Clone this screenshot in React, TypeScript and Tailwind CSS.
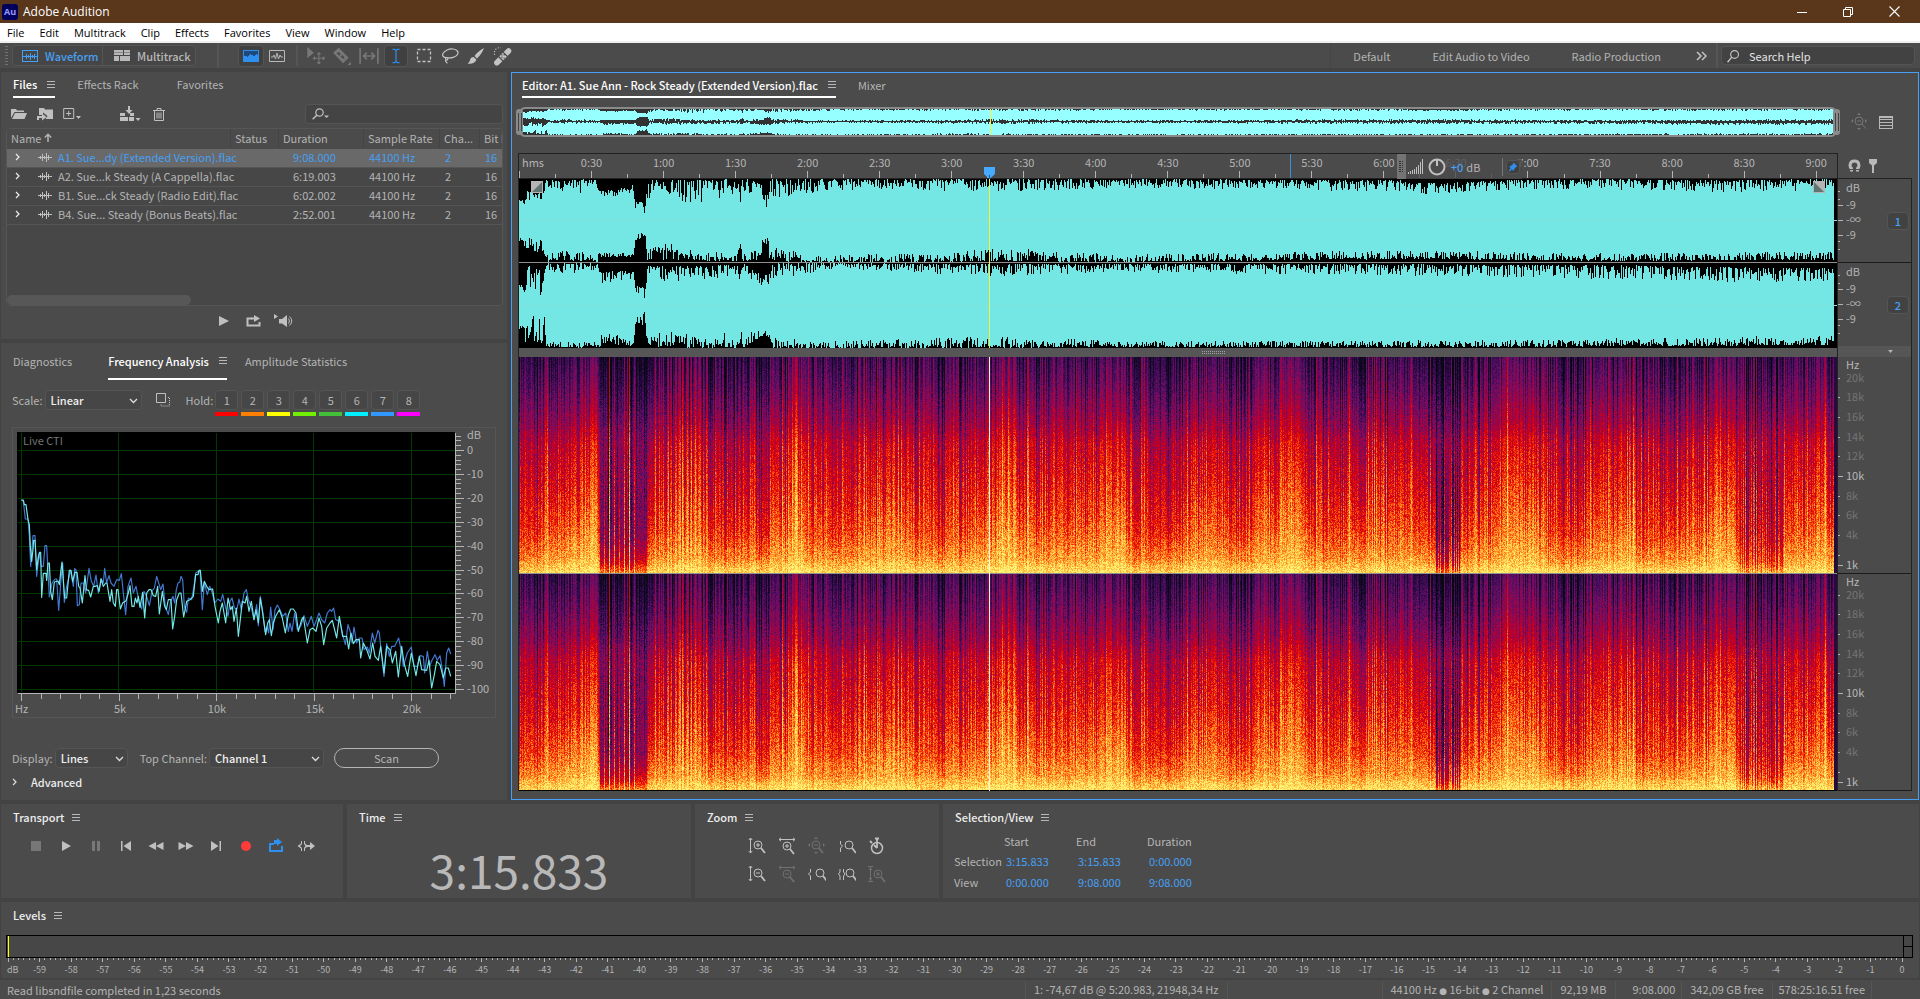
import { useEffect, useRef } from "react";
import type { ReactNode } from "react";
import clsx from "clsx";

type EnvelopeKey = [number, number, number];

const TRACK_WIDTH = 1319;
const DATA_END = 1316;

const FILES = [
  { name: "A1. Sue...dy (Extended Version).flac", duration: "9:08.000" },
  { name: "A2. Sue...k Steady (A Cappella).flac", duration: "6:19.003" },
  { name: "B1. Sue...ck Steady (Radio Edit).flac", duration: "6:02.002" },
  { name: "B4. Sue... Steady (Bonus Beats).flac", duration: "2:52.001" },
];

const HOLD_COLORS = [
  "bg-[#ff0000]",
  "bg-[#ff8000]",
  "bg-[#ffff00]",
  "bg-[#70f000]",
  "bg-[#42c038]",
  "bg-[#00f0ff]",
  "bg-[#3098ff]",
  "bg-[#ff00ff]",
];

const TRACE_TOP =
  "64,241 70,241 73,255 78,255 84,300 88,315 91,380 95,425 99,390 101,362 105,362 110,450 115,410 119,398 122,398 125,533 130,461 138,461 140,482 144,430 148,430 152,515 157,540 163,487 174,484 178,495 183,450 186,427 189,470 194,535 200,535 208,452 213,452 218,485 225,458 231,458 236,500 240,505 244,530 247,550 255,468 259,510 266,512 272,532 280,500 285,500 292,498 297,515 303,477 310,500 317,490 321,490 325,515 330,545 335,510 340,550 346,560 350,510 354,510 361,568 368,550 378,543 385,520 390,498 396,560 402,560 406,535 411,550 415,530 420,563 428,518 434,595 440,520 447,510 453,510 460,528 467,530 473,500 478,583 487,515 494,560 499,570 505,540 513,540 518,628 524,590 530,540 538,520 543,520 551,592 560,545 570,540 580,530 587,465 594,465 597,452 601,452 607,515 613,485 620,500 627,510 638,508 645,560 655,610 660,575 667,550 677,610 684,535 692,570 697,560 702,605 709,565 715,650 722,590 727,545 735,550 740,530 747,575 754,545 762,600 768,570 775,610 781,535 788,580 797,645 803,610 808,600 814,648 820,610 827,590 838,570 847,595 856,640 865,585 872,568 880,568 888,580 895,635 905,600 910,592 922,670 930,630 938,625 948,635 957,595 965,620 971,675 980,625 990,610 997,602 1010,655 1018,590 1028,650 1040,650 1046,688 1053,640 1060,672 1068,660 1078,660 1082,715 1090,670 1100,690 1110,718 1118,670 1125,710 1135,722 1142,680 1152,760 1160,680 1170,690 1177,730 1187,695 1195,772 1205,680 1212,730 1223,770 1234,700 1248,768 1258,710 1265,750 1280,752 1287,722 1295,805 1303,765 1310,725 1320,735 1330,775 1337,745 1345,745 1352,770";

const TRACE_BACK =
  "64,241 70,245 76,298 84,298 88,350 92,440 99,348 105,348 110,470 118,398 124,440 130,440 135,378 140,378 148,532 156,490 165,478 170,478 176,572 183,480 188,430 193,548 200,500 212,452 220,500 224,447 228,450 232,558 238,555 243,490 250,490 257,520 267,446 274,485 281,500 288,466 295,520 305,480 310,490 314,446 320,490 327,468 333,490 342,500 350,480 358,482 364,462 370,520 377,585 384,500 393,475 400,520 408,500 417,545 425,568 432,515 440,530 448,558 456,515 463,505 470,470 476,490 482,510 489,493 496,560 505,585 512,545 519,530 524,550 529,510 534,490 539,488 543,470 548,480 553,560 560,578 565,535 575,540 582,500 587,460 600,452 607,570 613,488 622,525 629,500 637,520 644,550 654,538 662,545 668,524 676,560 684,590 690,545 696,535 703,565 711,568 717,538 724,570 732,520 739,510 745,540 753,560 762,600 770,555 775,618 781,530 788,575 795,635 801,620 806,640 812,562 819,630 825,570 832,556 840,570 848,590 857,580 865,635 870,610 876,635 884,580 892,630 902,620 912,588 922,620 934,590 942,620 950,600 957,580 965,600 974,610 982,580 990,570 995,575 1001,565 1007,600 1020,605 1028,645 1036,675 1044,615 1052,640 1056,670 1062,622 1070,670 1078,655 1086,655 1092,690 1102,682 1108,700 1117,640 1124,670 1134,632 1138,640 1144,700 1152,770 1160,672 1168,710 1175,680 1184,680 1196,655 1205,700 1210,740 1222,700 1234,682 1242,740 1252,740 1260,708 1270,710 1274,760 1282,695 1289,740 1296,722 1305,705 1312,722 1320,708 1327,750 1333,800 1340,700 1346,685 1352,703";

// [x, smallest gap, largest gap] between the waveform and the edge of its lane
const LEFT_TOP: EnvelopeKey[] = [
  [0, 21, 26], [6, 21, 27], [7, 12, 26], [25, 12, 25], [26, 1, 8], [42, 2, 13], [62, 0, 14], [78, 1, 9],
  [79, 11, 16], [95, 11, 18], [114, 6, 15], [116, 22, 34], [126, 24, 36], [128, 0, 22], [180, 1, 24],
  [218, 0, 16], [221, 14, 24], [223, 0, 14], [242, 1, 15], [243, 14, 28], [249, 16, 28], [250, 0, 19],
  [300, 0, 14], [340, 0, 10], [470, 0, 13], [600, 0, 9], [878, 1, 13], [905, 4, 16], [940, 3, 14],
  [990, 1, 11], [1060, 0, 10], [1200, 1, 13], [1316, 0, 12],
];
const LEFT_BOTTOM: EnvelopeKey[] = [
  [0, 21, 25], [6, 14, 24], [25, 8, 26], [27, 0, 7], [40, 2, 12], [78, 0, 9], [80, 5, 9], [114, 5, 10],
  [116, 22, 34], [126, 24, 36], [128, 1, 14], [155, 3, 22], [165, 1, 14], [218, 1, 8], [221, 14, 24],
  [223, 1, 8], [242, 2, 14], [244, 20, 30], [249, 16, 24], [250, 2, 15], [275, 0, 12], [290, 0, 7],
  [430, 0, 9], [470, 1, 15], [600, 0, 8], [900, 3, 12], [1100, 1, 9], [1316, 2, 11],
];
const RIGHT_TOP: EnvelopeKey[] = [
  [0, 22, 26], [6, 22, 34], [8, 1, 26], [25, 10, 34], [27, 0, 7], [50, 0, 12], [79, 0, 7], [81, 8, 20],
  [114, 8, 18], [116, 23, 30], [126, 24, 37], [128, 3, 15], [150, 3, 20], [218, 2, 14], [221, 10, 20],
  [223, 0, 10], [243, 12, 26], [249, 12, 22], [250, 0, 16], [280, 0, 12], [320, 0, 6], [470, 1, 14],
  [600, 1, 9], [800, 1, 12], [1100, 2, 16], [1200, 4, 19], [1316, 5, 19],
];
const RIGHT_BOTTOM: EnvelopeKey[] = [
  [0, 19, 22], [6, 5, 34], [25, 5, 34], [27, 1, 6], [79, 0, 7], [82, 3, 16], [100, 2, 15], [114, 2, 8],
  [116, 24, 32], [126, 23, 38], [128, 0, 11], [155, 2, 22], [160, 0, 14], [196, 0, 18], [218, 0, 10],
  [222, 8, 22], [224, 0, 9], [243, 12, 26], [249, 10, 18], [251, 0, 15], [285, 0, 6], [460, 0, 12],
  [600, 1, 7], [1000, 1, 8], [1316, 3, 13],
];

// Slow loudness curve of the track, in palette units
const LOUDNESS: [number, number][] = [
  [0, -0.1], [20, -0.05], [26, 0.0], [76, 0.09], [80, -0.1], [110, -0.1], [116, -0.2], [127, -0.2],
  [130, -0.04], [175, 0.03], [200, -0.07], [238, -0.03], [241, -0.1], [249, -0.1], [251, 0.0],
  [283, 0.04], [287, -0.09], [300, -0.03], [320, -0.07], [370, 0.07], [410, -0.07], [470, 0.02],
  [480, 0.07], [540, -0.04], [605, 0.09], [613, -0.09], [650, -0.08], [682, 0.03], [720, -0.05],
  [778, 0.07], [800, -0.06], [850, 0.01], [915, -0.03], [918, -0.12], [940, -0.11], [952, -0.03],
  [1020, 0.07], [1030, -0.07], [1060, -0.05], [1115, 0.07], [1120, -0.1], [1150, -0.03],
  [1214, 0.06], [1219, -0.08], [1260, -0.06], [1300, 0.02], [1319, -0.02],
];

// Average energy from the highest frequency (0) down to the lowest (1)
const SPECTRUM: [number, number][] = [
  [0, 0.19], [0.15, 0.29], [0.3, 0.41], [0.4, 0.52], [0.6, 0.61], [0.8, 0.72], [0.93, 0.83], [1, 0.97],
];

const PALETTE = [
  [8, 8, 20], [30, 8, 52], [62, 12, 88], [104, 14, 100], [142, 8, 84], [180, 0, 48], [216, 0, 18],
  [238, 36, 0], [255, 100, 20], [255, 160, 50], [255, 208, 76], [255, 244, 120],
];

const DB_LABELS: [string, number][] = [["dB", 9], ["-9", 26], ["-∞", 41], ["-9", 56]];
const HZ_LABELS: [string, number, boolean][] = [
  ["Hz", 8, true], ["20k", 21, false], ["18k", 40, false], ["16k", 60, false], ["14k", 80, false],
  ["12k", 99, false], ["10k", 119, true], ["8k", 139, false], ["6k", 158, false], ["4k", 178, false],
  ["1k", 208, true],
];

function makeRandom(seed: number) {
  let s = seed;
  return () => {
    s = (s * 1664525 + 1013904223) >>> 0;
    return s / 4294967296;
  };
}

function interpolate(keys: [number, number][], at: number) {
  let k = 0;
  while (k < keys.length - 2 && keys[k + 1][0] <= at) k++;
  const [x0, v0] = keys[k];
  const [x1, v1] = keys[k + 1];
  return v0 + ((v1 - v0) * (at - x0)) / (x1 - x0);
}

function envelope(keys: EnvelopeKey[], seed: number) {
  const random = makeRandom(seed);
  const out: number[] = [];
  let k = 0;
  for (let x = 0; x < DATA_END; x++) {
    while (k < keys.length - 2 && keys[k + 1][0] <= x) k++;
    const [x0, lo0, hi0] = keys[k];
    const [x1, lo1, hi1] = keys[k + 1];
    const t = Math.min(1, (x - x0) / (x1 - x0));
    const lo = lo0 + (lo1 - lo0) * t;
    const hi = hi0 + (hi1 - hi0) * t;
    out.push(Math.round(lo + (hi - lo) * Math.pow(random(), 1.7)));
  }
  return out;
}

function lanePath(top: number[], bottom: number[], height: number) {
  let d = "";
  top.forEach((gap, x) => {
    d += `M${x} ${gap}h1V${height - bottom[x]}h-1z`;
  });
  return d;
}

function overviewPath(a: number[], b: number[], c: number[], d: number[]) {
  let path = "";
  const size = (v: number) => Math.round(v / 6.5);
  for (let x = 0; x < DATA_END; x++) {
    path += `M${x} 0h1v${size(a[x])}h-1z`;
    path += `M${x} ${12 - size(b[x])}h1V${13 + size(c[x])}h-1z`;
    path += `M${x} 26h1v${-size(d[x])}h-1z`;
  }
  return path;
}

const leftTop = envelope(LEFT_TOP, 11);
const leftBottom = envelope(LEFT_BOTTOM, 29);
const rightTop = envelope(RIGHT_TOP, 47);
const rightBottom = envelope(RIGHT_BOTTOM, 83);

function Icon({ size = 18, className, children }: { size?: number; className?: string; children: ReactNode }) {
  return (
    <svg
      width={size}
      height={size}
      viewBox="0 0 18 18"
      fill="none"
      stroke="currentColor"
      className={clsx("shrink-0", className)}
      aria-hidden="true"
    >
      {children}
    </svg>
  );
}

function Burger() {
  return (
    <button type="button" aria-label="Panel menu" className="h-2 w-2 text-[#b8b8b8]">
      <svg width="8" height="7" viewBox="0 0 8 7" shapeRendering="crispEdges" fill="currentColor">
        <path d="M0 0h8v1H0zM0 3h8v1H0zM0 6h8v1H0z" />
      </svg>
    </button>
  );
}

function Tab({ children, active = false }: { children: ReactNode; active?: boolean }) {
  return (
    <div
      className={clsx(
        "flex h-full items-center gap-[10px] border-b-2",
        active ? "border-white text-white font-medium" : "border-transparent text-[#b4b4b4]"
      )}
    >
      <button type="button">{children}</button>
      {active && <Burger />}
    </div>
  );
}

function Select({ id, label, value, className }: { id: string; label: string; value: string; className: string }) {
  return (
    <div className="flex items-center gap-[2px]">
      <label htmlFor={id} className="whitespace-nowrap">
        {label}
      </label>
      <div className={clsx("relative", className)}>
        <select
          id={id}
          className="h-5 w-full appearance-none rounded-sm border border-[#555] bg-[#464646] pl-[5px] font-medium text-[#eee]"
        >
          <option>{value}</option>
        </select>
        <svg width="9" height="6" viewBox="0 0 9 6" className="pointer-events-none absolute right-1 top-2">
          <path d="M1 1l3.5 3.5L8 1" fill="none" stroke="#ddd" strokeWidth="1.3" />
        </svg>
      </div>
    </div>
  );
}

function TitleBar() {
  return (
    <header className="flex h-[23px] items-center justify-between bg-[#5a361b] font-['Open_Sans',sans-serif] text-xs text-white">
      <div className="flex items-center gap-[5px] pl-[2px]">
        <span className="flex h-4 w-4 items-center justify-center rounded-[3px] bg-[#00005b] text-[9px] font-bold text-[#9999ff]">
          Au
        </span>
        <h1>Adobe Audition</h1>
      </div>
      <div className="flex items-center gap-9 pr-5">
        <button type="button" aria-label="Minimize">
          <svg width="10" height="10" viewBox="0 0 10 10">
            <path d="M0 5.5h10" stroke="#fff" />
          </svg>
        </button>
        <button type="button" aria-label="Restore">
          <svg width="10" height="10" viewBox="0 0 10 10" fill="none" stroke="#fff">
            <path d="M.5 2.5h7v7h-7zM2.500 2.500v-2h7v7h-2" />
          </svg>
        </button>
        <button type="button" aria-label="Close">
          <svg width="11" height="11" viewBox="0 0 11 11">
            <path d="M.5.5l10 10M10.500.5l-10 10" stroke="#fff" strokeWidth="1.100" />
          </svg>
        </button>
      </div>
    </header>
  );
}

function MenuBar() {
  const items = ["File", "Edit", "Multitrack", "Clip", "Effects", "Favorites", "View", "Window", "Help"];
  return (
    <nav className="flex h-5 items-center gap-[15px] border-b-2 border-[#f0f0f0] bg-white pl-[7px] pt-[2px] font-['Open_Sans',sans-serif] text-[11px] text-black">
      {items.map((item) => (
        <button type="button" key={item}>
          {item}
        </button>
      ))}
    </nav>
  );
}

function Toolbar() {
  return (
    <div className="flex h-[25px] items-center bg-[#4b4b4b]">
      <svg width="3" height="20" className="ml-[5px] mr-1" shapeRendering="crispEdges">
        <path d="M1.500 0v20" stroke="#707070" strokeWidth="3" strokeDasharray="1 2" />
      </svg>
      <div className="flex h-[21px] rounded-sm border border-[#555] bg-[#464646] font-medium">
        <button type="button" className="flex w-[90px] items-center gap-[7px] border-r border-[#555] pl-[9px] text-[#46a0f5]">
          <svg width="16" height="12" viewBox="0 0 16 12" fill="none" stroke="currentColor" shapeRendering="crispEdges">
            <path d="M.5.5h15v11H.5zM1 6h14M4.500 3.500v5M6.500 4.500v3M8.500 2.500v7M10.500 4.500v3M12.500 3.500v5" />
          </svg>
          Waveform
        </button>
        <button type="button" className="flex w-[92px] items-center gap-[7px] pl-[11px] text-[#b8b8b8]">
          <svg width="16" height="11" viewBox="0 0 16 11" fill="#b8b8b8" shapeRendering="crispEdges">
            <path d="M0 0h9v5H0zM10 0h6v5h-6zM0 6h5v5H0zM6 6h10v5H6z" />
            <path d="M0 2h9v1H0zM10 2h6v1h-6z" fill="#8a8a8a" />
          </svg>
          Multitrack
        </button>
      </div>
      <div className="ml-[21px] h-[25px] w-[2px] bg-[#555]" />
      <button
        type="button"
        aria-label="Show waveform"
        className="ml-[19px] flex h-[22px] w-[26px] items-center justify-center rounded-sm border border-[#555] bg-[#404040]"
      >
        <svg width="16" height="12" viewBox="0 0 16 12" shapeRendering="crispEdges">
          <path d="M0 0h16v12H0z" fill="#2f8fee" />
          <path d="M1 1h14v5l-1-3-1 3-1-2-1 4-1-4-1 2-1-3-1 3-1-2-1 4-1-3-1 3-1-4-1 5z" fill="#1d4a7c" />
        </svg>
      </button>
      <button type="button" aria-label="Show spectral display" className="ml-[5px]">
        <svg width="16" height="12" viewBox="0 0 16 12" fill="none" stroke="#b8b8b8">
          <path d="M.5.5h15v11H.5zM2 7h2l1-2 1.500 4L8 3l1.500 6L11 5l1 2h2" />
        </svg>
      </button>
      <div className="ml-[11px] h-[21px] w-[2px] bg-[#555]" />
      <div className="ml-[7px] flex items-center gap-[7px] text-[#777]">
        <button type="button" aria-label="Move tool">
          <Icon size={20}>
            <path d="M2 1v10l6-5z" fill="currentColor" stroke="none" />
            <path d="M12.500 6v10M7.500 11h10M11 7.500L12.500 6 14 7.500M11 14.500l1.500 1.500 1.500-1.500M9 9.500L7.500 11 9 12.500M16 9.500l1.500 1.500-1.500 1.500" />
          </Icon>
        </button>
        <button type="button" aria-label="Razor tool">
          <Icon size={20}>
            <path d="M1 6l5-4.500 9 9-5 5z" fill="currentColor" stroke="none" />
            <path d="M5 6l7 6" stroke="#4b4b4b" strokeWidth="2" strokeDasharray="3 1.500" />
            <path d="M17 14v3h-3z" fill="currentColor" stroke="none" />
          </Icon>
        </button>
        <button type="button" aria-label="Slip tool">
          <Icon size={20}>
            <path d="M1 2v14M17 2v14" strokeWidth="1.500" />
            <path d="M4 9h10M7 6L4 9l3 3M11 6l3 3-3 3" strokeWidth="1.500" />
          </Icon>
        </button>
      </div>
      <button
        type="button"
        aria-label="Time selection tool"
        className="ml-[5px] flex h-[22px] w-6 items-center justify-center rounded-sm border border-[#555] bg-[#404040] text-[#2f8fee]"
      >
        <Icon size={16}>
          <path d="M5 1.500h2.500L9 3l1.500-1.500H13M5 16.500h2.500L9 15l1.500 1.500H13M9 3v12" strokeWidth="1.300" />
        </Icon>
      </button>
      <div className="ml-[7px] flex items-center gap-2 text-[#c4c4c4]">
        <button type="button" aria-label="Marquee selection tool">
          <Icon>
            <path d="M2.500 2.500h13v12h-13z" strokeDasharray="3 2" strokeWidth="1.300" />
          </Icon>
        </button>
        <button type="button" aria-label="Lasso selection tool">
          <Icon>
            <path d="M6 10.500C2.500 10.800.8 8.800 2 6.500 3.500 3.500 8 1.500 12 2c4 .5 6 3 4.500 5.500-1.500 2.500-6.500 4-10.500 3zM6 10.500c1.500.8.800 2.800-.5 2.500-1.500-.3-1.200-2.300.5-2.500M4.800 12.800c-.6 1.500.2 2.700 1.700 3.500" strokeWidth="1.200" />
          </Icon>
        </button>
        <button type="button" aria-label="Paintbrush selection tool">
          <Icon>
            <path d="M17 1c-4 2-7.500 5-9.500 8l2.500 2.500C13 9 15.500 5 17 1zM6.500 10c-2 0-3 1-3.500 3-.300 1.500-1 2.500-2.500 3.500 3.500.8 7.500 0 9-4z" fill="currentColor" stroke="none" />
          </Icon>
        </button>
        <button type="button" aria-label="Spot healing brush">
          <Icon size={20}>
            <path d="M1.500 13.500l11-11a2.500 2.500 0 013.500 3.500l-11 11a2.500 2.500 0 01-3.500-3.500z" fill="currentColor" stroke="none" />
            <path d="M5 9.500l4 4M9 5.500l4 4M7.500 10h1M9.500 8h1M9.500 11h1M7.500 8h1" stroke="#4b4b4b" strokeWidth="1.100" />
            <path d="M1.500 8C.5 4 3 1 7 1.500" strokeDasharray="1 1.500" />
          </Icon>
        </button>
      </div>
      <div className="ml-auto flex h-full items-center border-l border-[#454545] pl-[22px]">
        <div className="flex gap-[42px]">
          <button type="button">Default</button>
          <button type="button">Edit Audio to Video</button>
          <button type="button">Radio Production</button>
        </div>
        <button type="button" aria-label="More workspaces" className="ml-[35px]">
          <svg width="11" height="10" viewBox="0 0 11 10" fill="none" stroke="#c4c4c4" strokeWidth="1.500">
            <path d="M1 1l4 4-4 4M6 1l4 4-4 4" />
          </svg>
        </button>
        <div className="ml-[9px] h-full w-[2px] bg-[#555]" />
        <label className="ml-[3px] mr-[5px] flex h-[19px] w-[194px] items-center gap-[9px] rounded-sm border border-[#555] bg-[#424242] pl-1">
          <Icon size={14} className="text-[#c4c4c4]">
            <circle cx="11" cy="7" r="5" strokeWidth="1.500" />
            <path d="M7.500 10.500L2 17" strokeWidth="1.800" />
          </Icon>
          <input
            aria-label="Search Help"
            placeholder="Search Help"
            className="w-full bg-transparent outline-none placeholder:text-[#e4e4e4]"
          />
        </label>
      </div>
    </div>
  );
}

function LoopIcon({ className }: { className?: string }) {
  return (
    <svg width="15" height="12" viewBox="0 0 15 12" className={className} fill="none" stroke="currentColor">
      <path d="M6 3.500H1.500v7h12V7" strokeWidth="2" />
      <path d="M5 2.500h3V0l6 3.500L8 7V4.500H5z" fill="currentColor" stroke="none" />
    </svg>
  );
}

function FilesPanel() {
  return (
    <section className="bg-[#4b4b4b] pb-[10px] pl-[5px] pr-1">
      <div className="flex h-[26px] items-center gap-[22px] pl-[7px]">
        <Tab active>Files</Tab>
        <div className="flex gap-[38px]">
          <Tab>Effects Rack</Tab>
          <Tab>Favorites</Tab>
        </div>
      </div>
      <div className="mt-[6px] flex h-5 items-center pl-[5px] text-[#c0c0c0]">
        <button type="button" aria-label="Open file">
          <svg width="16" height="12" viewBox="0 0 16 12" fill="currentColor">
            <path d="M0 10V1h5l1 1.500h7V4H3.500zM4 5h12l-2.500 6H1z" />
          </svg>
        </button>
        <button type="button" aria-label="Import file" className="ml-[10px]">
          <svg width="17" height="14" viewBox="0 0 17 14" fill="currentColor">
            <path d="M2 7V1h5l1 1.500h8V12H8.500l2-3L6 5.500V8H2zM0 9h5V6.500L9.500 10 5 13.500V11H2v2H0z" />
          </svg>
        </button>
        <button type="button" aria-label="New file" className="ml-[9px]">
          <svg width="19" height="14" viewBox="0 0 19 14" fill="none" stroke="currentColor">
            <path d="M.7 1.500h10v10H.7zM5.700 4v5M3.200 6.500h5" />
            <path d="M13 9h5l-2.500 3z" fill="currentColor" stroke="none" />
          </svg>
        </button>
        <button type="button" aria-label="Insert into multitrack" className="ml-[38px]">
          <svg width="21" height="16" viewBox="0 0 21 16" fill="currentColor">
            <path d="M0 7h5v3H0zM10 7h4v3h-4zM0 11h8v4H0zM9 11h5v4H9zM8 0h2v4h2.500L9 8 5.500 4H8zM15.500 12h5L18 15z" />
          </svg>
        </button>
        <button type="button" aria-label="Delete" className="ml-3">
          <svg width="12" height="13" viewBox="0 0 12 13" fill="none" stroke="currentColor">
            <path d="M0 2.500h12M4 2V.5h4V2M1.500 3v9.500h9V3M4 4.500v6M6 4.500v6M8 4.500v6" />
          </svg>
        </button>
        <label className="ml-auto flex h-5 w-[198px] items-center rounded-sm border border-[#555] bg-[#444] pl-[6px]">
          <svg width="18" height="12" viewBox="0 0 18 12" fill="none" stroke="currentColor" className="shrink-0">
            <circle cx="7.500" cy="4.500" r="3.700" strokeWidth="1.200" />
            <path d="M5 7L.7 11.300" strokeWidth="1.400" />
            <path d="M12 7.500h5L14.500 10z" fill="currentColor" stroke="none" />
          </svg>
          <input aria-label="Filter files" className="w-full bg-transparent outline-none" />
        </label>
      </div>
      <div className="mt-1 flex h-[178px] w-[497px] flex-col justify-between overflow-hidden rounded-sm border border-[#565656] bg-[#474747]">
        <table className="w-full table-fixed border-separate border-spacing-0 text-left">
          <colgroup>
            <col className="w-[223px]" />
            <col className="w-[48px]" />
            <col className="w-[85px]" />
            <col className="w-[76px]" />
            <col className="w-[40px]" />
            <col />
          </colgroup>
          <thead>
            <tr className="h-5 bg-[#4b4b4b] [&>th]:pb-[3px] [&>th]:pl-1 [&>th]:pt-0 [&>th]:font-normal [&>th+th]:border-l [&>th+th]:border-[#444]">
              <th>
                <span className="flex items-center gap-[3px]">
                  Name
                  <svg width="8" height="9" viewBox="0 0 8 9" fill="none" stroke="#b4b4b4" strokeWidth="1.500">
                    <path d="M4 9V1.500M.8 4.500L4 1.300l3.200 3.200" />
                  </svg>
                </span>
              </th>
              <th>Status</th>
              <th>Duration</th>
              <th>Sample Rate</th>
              <th>Cha...</th>
              <th className="overflow-hidden whitespace-nowrap">Bit D</th>
            </tr>
          </thead>
          <tbody>
            {FILES.map((file, i) => (
              <tr
                key={file.name}
                className={clsx(
                  "h-[19px] whitespace-nowrap [&>td]:border-b [&>td]:border-[#555] [&>td]:py-0 [&>td]:pb-[2px]",
                  i === 0 && "bg-[#696969] text-[#46a0f5]"
                )}
              >
                <td className="pl-2">
                  <span className="flex items-center">
                    <svg width="5" height="8" viewBox="0 0 5 8" fill="none" stroke="#eee" strokeWidth="1.200" className="shrink-0">
                      <path d="M1 1l3 3-3 3" />
                    </svg>
                    <svg width="14" height="9" viewBox="0 0 14 9" className="ml-[18px] mr-[6px] shrink-0" stroke="#c0c0c0" shapeRendering="crispEdges">
                      <path d="M0 4.500h14M2.500 3v3M4.500 1v7M6.500 3v3M8.500 0v9M10.500 2v5" />
                    </svg>
                    {file.name}
                  </span>
                </td>
                <td />
                <td className="pl-[15px]">{file.duration}</td>
                <td className="pl-[6px]">44100 Hz</td>
                <td className="pl-[6px]">2</td>
                <td className="pl-[6px]">16</td>
              </tr>
            ))}
          </tbody>
        </table>
        <div className="h-[10px] w-[184px] rounded-full bg-[#575757]" />
      </div>
      <div className="mt-[7px] flex h-4 items-center justify-center gap-[17px] pl-1 text-[#c0c0c0]">
        <button type="button" aria-label="Play preview">
          <svg width="10" height="10" viewBox="0 0 10 10" fill="currentColor">
            <path d="M0 0v10l10-5z" />
          </svg>
        </button>
        <button type="button" aria-label="Loop preview">
          <LoopIcon />
        </button>
        <button type="button" aria-label="Auto-play" className="-ml-1">
          <svg width="21" height="14" viewBox="0 0 21 14" fill="none" stroke="currentColor">
            <path d="M0 0v5l4-2.500zM5 5h3l5-4v12L8 9.500H5z" fill="currentColor" stroke="none" />
            <path d="M14.500 4.500q2 2.500 0 5M15.500 2.500q4.500 4.500 0 9" />
          </svg>
        </button>
      </div>
    </section>
  );
}

function FrequencyChart() {
  const dbTicks = Array.from({ length: 54 }, (_, i) => i);
  return (
    <svg viewBox="0 0 484 291" className="mt-[11px] block h-[291px] w-[484px]" fill="#b4b4b4" fontSize="11">
      <rect x=".5" y=".5" width="483" height="290" fill="none" stroke="#565656" />
      <rect x="5" y="5" width="438" height="261" fill="#000" />
      <g stroke="#003a00" shapeRendering="crispEdges">
        {Array.from({ length: 11 }, (_, i) => (
          <path key={i} d={`M6 ${Math.round(23 + i * 23.9) + 0.5}h437`} />
        ))}
        {[9.5, 106.5, 204.5, 301.5, 399.5].map((x) => (
          <path key={x} d={`M${x} 6v259`} />
        ))}
      </g>
      <svg x="0" y="0" width="484" height="291" viewBox="36 22 1452 873" fill="none">
        <polyline points={TRACE_BACK} stroke="#4379d2" strokeWidth="3.500" strokeLinejoin="round" />
        <polyline points={TRACE_TOP} stroke="#74e8e6" strokeWidth="3.500" strokeLinejoin="round" />
      </svg>
      <g stroke="#b4b4b4" shapeRendering="crispEdges">
        <path d="M443.500 6v260.500H6" fill="none" />
        {dbTicks.map((i) => {
          const y = Math.round(262 - i * 4.780) + 0.5;
          return <path key={i} d={`M444 ${y}h${i % 5 === 0 ? 8 : 5}`} />;
        })}
        {Array.from({ length: 23 }, (_, i) => (
          <path key={i} d={`M${Math.round(9 + i * 19.500) + 0.5} 267v${i % 5 === 0 ? 7 : 5}`} />
        ))}
      </g>
      <text x="11" y="18" fill="#757575">Live CTI</text>
      <text x="455" y="12">dB</text>
      {Array.from({ length: 11 }, (_, i) => (
        <text key={i} x="455" y={Math.round(27 + i * 23.9)}>
          {i === 0 ? "0" : -10 * i}
        </text>
      ))}
      <text x="3" y="286">Hz</text>
      {[5, 10, 15, 20].map((k) => (
        <text key={k} x={Math.round(10 + k * 19.500)} y="286" textAnchor="middle">
          {k}k
        </text>
      ))}
    </svg>
  );
}

function FrequencyPanel() {
  return (
    <section className="flex-1 bg-[#4b4b4b] pb-2 pl-[11px]">
      <div className="flex h-[37px] gap-[18px] pl-[1px]">
        <Tab>Diagnostics</Tab>
        <div className="ml-[18px] flex">
          <Tab active>Frequency Analysis</Tab>
        </div>
        <Tab>Amplitude Statistics</Tab>
      </div>
      <div className="mt-[10px] flex items-start">
        <Select id="scale" label="Scale:" value="Linear" className="w-[97px]" />
        <button type="button" aria-label="Copy graph" className="ml-[14px] mt-[3px]">
          <svg width="15" height="14" viewBox="0 0 15 14" fill="none" stroke="#c0c0c0">
            <path d="M.5.5h9v9h-9z" />
            <path d="M12 4.500h1.500v8.500H5v-2" strokeDasharray="1 1" />
          </svg>
        </button>
        <span className="ml-[15px] mt-[2px]">Hold:</span>
        <div className="ml-[2px] flex gap-[3px]">
          {HOLD_COLORS.map((color, i) => (
            <button type="button" key={color} className="w-[23px]">
              <span className="flex h-5 items-center justify-center rounded-sm border border-[#555] bg-[#464646]">
                {i + 1}
              </span>
              <span className={clsx("mt-[2px] block h-1", color)} />
            </button>
          ))}
        </div>
      </div>
      <FrequencyChart />
      <div className="mt-[30px] flex items-center">
        <Select id="display" label="Display:" value="Lines" className="w-[73px]" />
        <div className="ml-3">
          <Select id="channel" label="Top Channel:" value="Channel 1" className="w-[115px]" />
        </div>
        <button type="button" className="ml-[10px] h-5 w-[105px] rounded-full border border-[#b4b4b4]">
          Scan
        </button>
      </div>
      <button type="button" className="mt-[6px] flex items-center gap-[14px] font-medium text-[#eee]">
        <svg width="5" height="8" viewBox="0 0 5 8" fill="none" stroke="#ddd" strokeWidth="1.200">
          <path d="M1 1l3 3-3 3" />
        </svg>
        Advanced
      </button>
    </section>
  );
}

function Spectrogram({ seed, label }: { seed: number; label: string }) {
  const ref = useRef<HTMLCanvasElement>(null);

  useEffect(() => {
    const canvas = ref.current;
    const ctx = canvas?.getContext("2d");
    if (!canvas || !ctx) return;
    const { width, height } = canvas;
    const shared = makeRandom(5);
    const random = makeRandom(seed);
    const image = ctx.createImageData(width, height);
    const spectrum = Array.from({ length: height }, (_, y) => interpolate(SPECTRUM, y / height));
    let drift = 0;
    for (let x = 0; x < width; x++) {
      const loud = interpolate(LOUDNESS, x);
      const strike = shared();
      drift = drift * 0.88 + (shared() - 0.5) * 0.04;
      let column = drift + (shared() - 0.5) * 0.09 + (random() - 0.5) * 0.05;
      if (strike > 0.94) column += 0.17;
      else if (strike > 0.83) column += 0.09;
      else if (strike < 0.09) column -= 0.2;
      else if (strike < 0.28) column -= 0.11;

      // quiet passages where only the drum hits reach the low end
      let low = 0;
      if (x > 80 && x < 116) {
        column += x % 5 === 0 ? 0.16 : -0.07;
        low = x % 5 === 0 ? 0 : 0.26;
      } else if (x >= 116 && x < 128) {
        low = 0.1 + strike * 0.14;
      } else if (x > 128 && x < 225) {
        column += x % 4 === 0 ? 0.1 : x % 4 === 2 ? -0.1 : 0;
      } else if (x > 917 && x < 942) {
        low = strike < 0.5 ? 0.3 : 0.02;
      } else if (x > 1219 && x < 1265) {
        low = strike < 0.5 ? 0.2 : 0.05;
      }

      for (let y = 0; y < height; y++) {
        const t = y / height;
        let e = spectrum[y];
        e += loud * (0.7 + 0.6 * t) * Math.min(1, (1.08 - t) * 4);
        e += column * Math.min(1, (1.12 - t) * 2.2);
        e -= low * Math.max(0, Math.min(1, (t - 0.35) * 2)) * Math.min(1, (1.04 - t) * 12);
        e += (random() - 0.5) * (0.11 + 0.12 * Math.min(1, t * 2));
        if (x >= DATA_END) e = 0.12;
        const p = Math.max(0, Math.min(0.999, e)) * (PALETTE.length - 1);
        const n = Math.floor(p);
        const f = p - n;
        const o = (y * width + x) * 4;
        for (let c = 0; c < 3; c++) image.data[o + c] = PALETTE[n][c] + (PALETTE[n + 1][c] - PALETTE[n][c]) * f;
        image.data[o + 3] = 255;
      }
    }
    ctx.putImageData(image, 0, 0);
  }, [seed]);

  return (
    <canvas
      ref={ref}
      width={TRACK_WIDTH}
      height={216}
      role="img"
      aria-label={label}
      className="block h-[216px] w-full [image-rendering:pixelated]"
    />
  );
}

function Overview() {
  return (
    <div className="relative h-[30px] w-full">
      <div className="mx-[3px] h-full overflow-hidden rounded-md border-2 border-[#8a8a8a] bg-[#96ffff]">
        <svg viewBox={`0 0 ${DATA_END} 26`} preserveAspectRatio="none" className="h-full w-full" shapeRendering="crispEdges">
          <path d={overviewPath(leftTop, leftBottom, rightTop, rightBottom)} fill="#323232" />
        </svg>
      </div>
      <div className="absolute inset-y-[2px] left-[35.800%] w-px bg-[#f4f43c]" />
      {["left-0", "right-0"].map((side) => (
        <div
          key={side}
          className={clsx("absolute top-[2px] flex h-[26px] w-[7px] items-center justify-center gap-[2px] rounded-[3px] bg-[#8a8a8a]", side)}
        >
          <i className="h-[18px] w-px bg-[#444]" />
          <i className="h-[18px] w-px bg-[#444]" />
        </div>
      ))}
    </div>
  );
}

function at(seconds: number) {
  return `${((0.5 + seconds * 2.403) / TRACK_WIDTH) * 100}%`;
}

function TimeRuler() {
  const marks = Array.from({ length: 37 }, (_, i) => i * 15);
  return (
    <div className="relative border-y border-[#222]">
      <svg className="block h-6 w-full" fontSize="11" fill="#b4b4b4">
        <text x="3" y="13">hms</text>
        <g stroke="#b4b4b4" shapeRendering="crispEdges">
          {marks.map((s) => (
            <line key={s} x1={at(s)} x2={at(s)} y1={s % 30 === 0 ? 17 : 20} y2="24" />
          ))}
        </g>
        {marks
          .filter((s) => s > 0 && s % 30 === 0)
          .map((s) => (
            <text key={s} x={at(s)} y="13" textAnchor="middle">
              {`${Math.floor(s / 60)}:${s % 60 === 0 ? "00" : "30"}`}
            </text>
          ))}
        <line x1={at(320.983)} x2={at(320.983)} y1="0" y2="24" stroke="#3a8fd6" shapeRendering="crispEdges" />
      </svg>
      <div className="absolute left-[66.600%] top-0 flex h-[25px] w-[125px] items-center bg-[#4b4b4b]/80">
        <div className="flex h-full w-[9px] items-center justify-center bg-[#747474]">
          <svg width="4" height="11" shapeRendering="crispEdges">
            <path d="M2 0v11" stroke="#333" strokeWidth="4" strokeDasharray="1 1" />
            <path d="M2 0v11" stroke="#747474" />
          </svg>
        </div>
        <svg width="15" height="15" viewBox="0 0 15 15" className="ml-[2px]" stroke="#c0c0c0" shapeRendering="crispEdges">
          <path d="M.5 13v2M2.500 12v3M4.500 11v4M6.500 10v5M8.500 8v7M10.500 6v9M12.500 3v12M14.500 0v15" />
        </svg>
        <button type="button" aria-label="Volume" className="ml-[5px]">
          <svg width="18" height="18" viewBox="0 0 18 18" fill="none" stroke="#c0c0c0" strokeWidth="2">
            <circle cx="9" cy="9" r="7.500" />
            <path d="M9 2v6" />
          </svg>
        </button>
        <span className="ml-[5px] font-medium text-[#46a0f5]">+0</span>
        <span className="ml-[3px]">dB</span>
        <div className="ml-auto h-[18px] w-px bg-[#777]" />
        <button
          type="button"
          aria-label="Pin"
          className="ml-[3px] mr-[2px] flex h-[14px] w-[14px] items-center justify-center rounded-sm border border-[#555] bg-[#404040] text-[#2f8fee]"
        >
          <Icon size={10}>
            <path d="M10 1l7 7-3 1-3 4-1 3-8-8 3-1 4-3zM4 11l3 3-6 4z" fill="currentColor" stroke="none" />
          </Icon>
        </button>
      </div>
      <svg width="12" height="12" viewBox="0 0 12 12" className="absolute bottom-[-1px] left-[35.280%]">
        <path d="M0 0h11v7l-5.500 5L0 7z" fill="#46aaff" />
        <path d="M5.500 8v4" stroke="#1d5a9c" />
      </svg>
    </div>
  );
}

function Lane({ top, bottom, height }: { top: number[]; bottom: number[]; height: number }) {
  return (
    <svg
      viewBox={`0 0 ${TRACK_WIDTH} ${height}`}
      preserveAspectRatio="none"
      className="block w-full bg-black"
      height={height}
      shapeRendering="crispEdges"
    >
      <path d={lanePath(top, bottom, height)} fill="#74e6e4" />
      <path d={`M0 ${height / 2}h${TRACK_WIDTH}`} stroke="#84e4de" />
    </svg>
  );
}

function FadeHandle({ className, path }: { className: string; path: string }) {
  return (
    <svg width="12" height="12" viewBox="0 0 12 12" className={clsx("absolute top-[2px]", className)}>
      <rect width="12" height="12" fill="#b4b4b4" />
      <path d={path} fill="#5f7473" />
    </svg>
  );
}

function DbScale({ channel }: { channel: number }) {
  return (
    <div className="flex h-[84px] items-center justify-between border-b border-[#1c1c1c] pr-[2px]">
      <svg className="h-full w-10" fontSize="11" fill="#b4b4b4">
        {DB_LABELS.map(([label, y]) => (
          <text key={y} x="8" y={y + 4}>
            {label}
          </text>
        ))}
        <path d="M0 26.500h5M0 41.500h5M0 56.500h5M0 12.500h2M0 20.500h2M0 62.500h2M0 70.500h2" stroke="#b4b4b4" shapeRendering="crispEdges" />
      </svg>
      <button
        type="button"
        className="h-[18px] w-[22px] rounded-sm border border-[#555] bg-[#424242] font-medium text-[#46a0f5]"
      >
        {channel}
      </button>
    </div>
  );
}

function HzScale() {
  return (
    <div className="h-[217px] border-b border-[#1c1c1c]">
      <svg className="h-[216px] w-12" fontSize="11">
        {HZ_LABELS.map(([label, y, major]) => (
          <g key={label}>
            <text x="8" y={y + 4} fill={major ? "#b8b8b8" : "#747474"}>
              {label}
            </text>
            {label !== "Hz" && (
              <path d={`M0 ${y + 0.5}h${major ? 5 : 2}`} stroke="#b4b4b4" shapeRendering="crispEdges" />
            )}
          </g>
        ))}
        <path d="M0 198.500h2" stroke="#b4b4b4" shapeRendering="crispEdges" />
      </svg>
    </div>
  );
}

function Editor() {
  return (
    <main className="min-w-0 flex-1 border border-[#46a0f5] bg-[#4b4b4b] pb-2">
      <div className="flex h-[25px] gap-[22px] pl-[10px]">
        <Tab active>Editor: A1. Sue Ann - Rock Steady (Extended Version).flac</Tab>
        <Tab>Mixer</Tab>
      </div>
      <div className="mt-[9px] flex items-center pl-1">
        <div className="min-w-0 flex-1">
          <Overview />
        </div>
        <div className="flex w-[78px] items-center gap-[11px] pl-[10px]">
          <button type="button" aria-label="Zoom out full" className="text-[#777]">
            <Icon>
              <circle cx="9" cy="8" r="4" />
              <path d="M7 8h4M12 11l4 4.500" />
              <path d="M9 0l2 2H7zM9 17l2-2H7zM1 8l2-2v4zM17 8l-2-2v4z" fill="currentColor" stroke="none" />
            </Icon>
          </button>
          <button type="button" aria-label="View options">
            <svg width="14" height="13" viewBox="0 0 14 13" fill="none" stroke="#b8b8b8" shapeRendering="crispEdges">
              <path d="M.5.5h13v12H.5zM1 3.500h12M1 6.500h12M1 9.500h12" />
              <path d="M1 1h12v1H1z" fill="#b8b8b8" stroke="none" />
            </svg>
          </button>
        </div>
      </div>
      <div className="mt-4 flex pl-[6px] pr-[6px]">
        <div className="min-w-0 flex-1 border-l border-r border-[#222]">
          <TimeRuler />
          <div className="relative">
            <Lane top={leftTop} bottom={leftBottom} height={83} />
            <div className="h-px bg-[#909090]" />
            <Lane top={rightTop} bottom={rightBottom} height={85} />
            <div className="absolute inset-y-0 left-[35.650%] w-px bg-[#f4f43c]" />
            <FadeHandle className="left-3" path="M1 11h10V1z" />
            <FadeHandle className="right-3" path="M1 11h10L1 1z" />
          </div>
          <div className="flex h-[9px] items-center justify-center bg-[#565656] pl-[72px]">
            <svg width="24" height="3" shapeRendering="crispEdges">
              <path d="M0 .5h24M0 2.500h24" stroke="#a0a0a0" strokeDasharray="1 1" />
            </svg>
          </div>
          <div className="relative bg-black pb-px">
            <Spectrogram seed={101} label="Left channel spectrogram" />
            <div className="h-px bg-[#909090]" />
            <Spectrogram seed={733} label="Right channel spectrogram" />
            <div className="absolute inset-y-0 left-[35.650%] w-px bg-[#f5f5dc]" />
          </div>
        </div>
        <div className="w-[74px]">
          <div className="flex h-[25px] items-center gap-2 pl-[10px] text-[#b8b8b8]">
            <button type="button" aria-label="Snapping">
              <svg width="13" height="13" viewBox="0 0 13 13" fill="none" stroke="currentColor" strokeWidth="3">
                <path d="M3.500 12.500V9.500C1.500 8 1 2 6.500 2S11.500 8 9.500 9.500v3" />
                <path d="M1 10.500h11" stroke="#4b4b4b" strokeWidth="1" />
              </svg>
            </button>
            <button type="button" aria-label="Markers">
              <svg width="8" height="14" viewBox="0 0 8 14" fill="currentColor">
                <path d="M0 0h8v4L5 6.500V14H3V6.500L0 4z" />
              </svg>
            </button>
          </div>
          <div className="border-r border-t border-[#222]">
            <DbScale channel={1} />
            <DbScale channel={2} />
            <div className="-mt-px flex h-[11px] items-center justify-end bg-[#565656] pr-[18px]">
              <svg width="5" height="3">
                <path d="M0 0h5L2.500 3z" fill="#b4b4b4" />
              </svg>
            </div>
            <HzScale />
            <HzScale />
          </div>
        </div>
      </div>
    </main>
  );
}

function PanelTitle({ children }: { children: ReactNode }) {
  return (
    <div className="flex h-[26px] items-center gap-2 pl-3">
      <h2 className="font-medium text-[#eee]">{children}</h2>
      <Burger />
    </div>
  );
}

const TRANSPORT: { label: string; icon: ReactNode; className?: string }[] = [
  { label: "Stop", icon: <path d="M4 4h10v10H4z" />, className: "text-[#777]" },
  { label: "Play", icon: <path d="M5 4v10l9-5z" /> },
  { label: "Pause", icon: <path d="M5 4h3v10H5zM10 4h3v10h-3z" />, className: "text-[#777]" },
  { label: "Move to previous", icon: <path d="M4 4h1.500v10H4zM14 4v10L6.500 9z" /> },
  { label: "Rewind", icon: <path d="M9 5v8L1.500 9zM16.500 5v8L9 9z" /> },
  { label: "Fast forward", icon: <path d="M9 5v8l7.500-4zM1.500 5v8L9 9z" /> },
  { label: "Move to next", icon: <path d="M12.500 4H14v10h-1.500zM4 4v10l7.500-5z" /> },
  { label: "Record", icon: <circle cx="9" cy="9" r="5" />, className: "text-[#ff3b3b]" },
  {
    label: "Loop playback",
    icon: <path d="M2 6h5v2H4v5h10V9h2v6H2zM7 4.500V3h3V1l5 4-5 4V7H7z" />,
    className: "text-[#2f8fee]",
  },
  {
    label: "Skip selection",
    icon: <path d="M4 4h1v3L3 9l2 2v3H4v-2.500L.5 9 4 6.500zM7 4h1v2.500L10 8h3V5l5 4-5 4v-3h-3l-2 1.500V14H7v-3l1.500-2L7 7z" />,
  },
];

function Lens({ x = 11, y = 8, sign }: { x?: number; y?: number; sign?: "+" | "-" }) {
  return (
    <>
      <circle cx={x} cy={y} r="4" />
      <path d={`M${x + 3} ${y + 3}l4 5`} strokeWidth="1.800" />
      {sign && <path d={`M${x - 2} ${y}h4`} />}
      {sign === "+" && <path d={`M${x} ${y - 2}v4`} />}
    </>
  );
}

const ZOOM_ICONS: { label: string; icon: ReactNode; dim?: boolean }[] = [
  { label: "Zoom in amplitude", icon: <><path d="M2.500 1v15M.8 3L2.500 1l1.700 2M.8 14l1.700 2 1.700-2" /><Lens x={10} y={8} sign="+" /></> },
  { label: "Zoom in time", icon: <><path d="M1 2.500h16M3 .8L1 2.500l2 1.700M15 .8l2 1.700-2 1.700" /><Lens x={9} y={9} sign="+" /></> },
  { label: "Zoom out full", icon: <><Lens x={8} y={8} sign="-" /><path d="M8 0l2 2H6zM8 17l2-2H6zM0 8l2-2v4zM17 8l-2-2v4z" fill="currentColor" stroke="none" /></>, dim: true },
  { label: "Zoom in at in point", icon: <><path d="M2.500 4v3l2 2-2 2v4" /><Lens x={11} y={8} /></> },
  { label: "Zoom to time", icon: <><circle cx="9" cy="11" r="5.500" strokeWidth="1.500" /><path d="M9 11V2M7 1.500h4M4 6L2 4M9 11l-3-3" strokeWidth="1.800" /></> },
  { label: "Zoom out amplitude", icon: <><path d="M2.500 1v15M.8 3L2.500 1l1.700 2M.8 14l1.700 2 1.700-2" /><Lens x={10} y={8} sign="-" /></> },
  { label: "Zoom out time", icon: <><path d="M1 2.500h16M3 .8L1 2.500l2 1.700M15 .8l2 1.700-2 1.700" /><Lens x={9} y={9} sign="-" /></>, dim: true },
  { label: "Zoom in at out point", icon: <><path d="M2.500 4v3l-2 2 2 2v4" /><Lens x={12} y={8} /></> },
  { label: "Zoom to selection", icon: <><path d="M2 4v3L.5 9 2 11v4M5.500 4v3L7 9l-1.500 2v4" /><Lens x={12} y={8} /></> },
  { label: "Zoom selected track", icon: <><path d="M2.500 2v14M0 1.500h5M0 16.500h5M1 5l1.500-2L4 5M1 13l1.500 2L4 13" /><Lens x={10} y={9} sign="+" /></>, dim: true },
];

function BottomPanels() {
  return (
    <div className="flex h-[94px] gap-1">
      <section className="w-[342px] bg-[#4b4b4b]">
        <PanelTitle>Transport</PanelTitle>
        <div className="mt-[7px] flex gap-3 pl-[26px]">
          {TRANSPORT.map((button) => (
            <button
              type="button"
              key={button.label}
              aria-label={button.label}
              className={button.className ?? "text-[#c0c0c0]"}
            >
              <svg width="18" height="18" viewBox="0 0 18 18" fill="currentColor">
                {button.icon}
              </svg>
            </button>
          ))}
        </div>
      </section>
      <section className="w-[344px] bg-[#4b4b4b]">
        <PanelTitle>Time</PanelTitle>
        <p className="mt-[15px] text-center text-[46px] leading-[48px] text-[#b8b8b8]">3:15.833</p>
      </section>
      <section className="w-[244px] bg-[#4b4b4b]">
        <PanelTitle>Zoom</PanelTitle>
        <div className="ml-[53px] mt-[7px] grid grid-cols-[repeat(5,18px)] gap-x-3 gap-y-[10px]">
          {ZOOM_ICONS.map((button) => (
            <button
              type="button"
              key={button.label}
              aria-label={button.label}
              className={button.dim ? "text-[#707070]" : "text-[#c0c0c0]"}
            >
              <Icon>{button.icon}</Icon>
            </button>
          ))}
        </div>
      </section>
      <section className="flex-1 bg-[#4b4b4b]">
        <PanelTitle>Selection/View</PanelTitle>
        <table className="ml-[11px] text-left">
          <thead>
            <tr className="h-[22px]">
              <td className="w-[50px]" />
              <th className="w-[72px] font-normal">Start</th>
              <th className="w-[71px] font-normal">End</th>
              <th className="font-normal">Duration</th>
            </tr>
          </thead>
          <tbody className="text-[#46a0f5]">
            <tr className="h-[18px]">
              <th className="font-normal text-[#b4b4b4]">Selection</th>
              <td className="pl-[2px]">3:15.833</td>
              <td className="pl-[2px]">3:15.833</td>
              <td className="pl-[2px]">0:00.000</td>
            </tr>
            <tr className="h-6">
              <th className="font-normal text-[#b4b4b4]">View</th>
              <td className="pl-[2px]">0:00.000</td>
              <td className="pl-[2px]">9:08.000</td>
              <td className="pl-[2px]">9:08.000</td>
            </tr>
          </tbody>
        </table>
      </section>
    </div>
  );
}

function Levels() {
  const minor = Array.from({ length: 361 }, (_, i) => i);
  return (
    <section className="h-[76px] bg-[#4b4b4b]">
      <PanelTitle>Levels</PanelTitle>
      <div className="ml-[5px] mr-[6px] mt-[7px] flex h-[23px] border border-black bg-[#474747]">
        <div className="ml-px w-px bg-[#ffff00]" />
        <div className="ml-auto flex w-[9px] flex-col border-l border-black">
          <div className="h-[11px] border-b border-black" />
        </div>
      </div>
      <div className="pl-[7px] pr-[17px]">
        <svg className="block h-5 w-full overflow-visible" fontSize="9" fill="#b4b4b4">
          <g stroke="#b4b4b4" shapeRendering="crispEdges">
            {minor.map((i) => (
              <line key={i} x1={`${i / 3.6}%`} x2={`${i / 3.6}%`} y1="0" y2={i % 6 === 0 ? 4 : 2} />
            ))}
          </g>
          <text x="-1" y="15">dB</text>
          {Array.from({ length: 60 }, (_, i) => i - 59).map((db) => (
            <text key={db} x={`${((db + 60) / 60) * 100}%`} y="15" textAnchor="middle">
              {db}
            </text>
          ))}
        </svg>
      </div>
    </section>
  );
}

function Dot() {
  return <span className="font-['DejaVu_Sans',sans-serif] text-[9px]">●</span>;
}

function StatusBar() {
  return (
    <footer className="mt-[2px] flex h-5 items-center justify-between bg-[#4b4b4b] pl-[7px] pr-12">
      <p>Read libsndfile completed in 1,23 seconds</p>
      <div className="flex whitespace-nowrap">
        <span className="border-x border-[#555] px-2">1: -74,67 dB @ 5:20.983, 21948,34 Hz</span>
        <span className="ml-[154px] border-l border-[#555] px-2">
          44100 Hz <Dot /> 16-bit <Dot /> 2 Channel
        </span>
        <span className="border-l border-[#555] px-2">92,19 MB</span>
        <span className="border-l border-[#555] pl-[17px] pr-[6px]">9:08.000</span>
        <span className="border-l border-[#555] px-2">342,09 GB free</span>
        <span className="border-x border-[#555] px-[6px]">578:25:16.51 free</span>
      </div>
    </footer>
  );
}

export default function App() {
  return (
    <div className="min-h-screen min-w-[1280px] bg-[#434343] font-['Noto_Sans_CJK_JP',sans-serif] text-[11px] leading-4 text-[#b4b4b4]">
      <TitleBar />
      <MenuBar />
      <Toolbar />
      <div className="flex flex-col gap-1 px-px pt-1">
        <div className="flex gap-1">
          <div className="flex w-[506px] shrink-0 flex-col gap-1">
            <FilesPanel />
            <FrequencyPanel />
          </div>
          <Editor />
        </div>
        <BottomPanels />
        <Levels />
      </div>
      <StatusBar />
    </div>
  );
}
